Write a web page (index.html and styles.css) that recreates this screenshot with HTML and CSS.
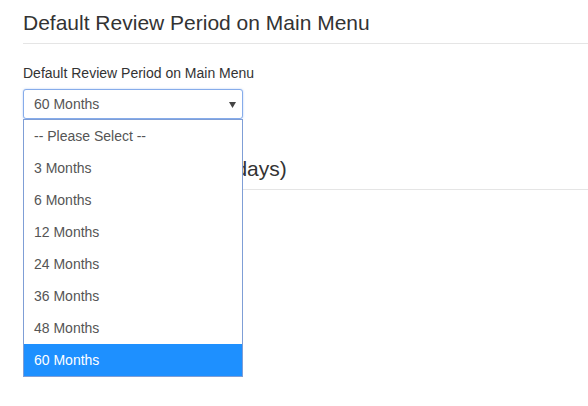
FILE: index.html
```html
<!DOCTYPE html>
<html lang="en">
<head>
<meta charset="utf-8">
<title>Default Review Period on Main Menu</title>
<link rel="stylesheet" href="styles.css">
</head>
<body>
  <section class="section">
    <h3 class="section-title">Default Review Period on Main Menu</h3>
    <div class="rule"></div>
    <div class="form-group">
      <label class="field-label">Default Review Period on Main Menu</label>
      <div class="select-wrap">
        <div class="select-box">
          <span class="select-value">60 Months</span>
          <svg class="select-arrow" width="7" height="6" viewBox="0 0 7 6"><polygon points="0,0 7,0 3.5,6" fill="#444"/></svg>
        </div>
        <ul class="dropdown">
          <li class="option">-- Please Select --</li>
          <li class="option">3 Months</li>
          <li class="option">6 Months</li>
          <li class="option">12 Months</li>
          <li class="option">24 Months</li>
          <li class="option">36 Months</li>
          <li class="option">48 Months</li>
          <li class="option selected">60 Months</li>
        </ul>
      </div>
    </div>
  </section>
  <section class="section second">
    <h3 class="section-title">Default Retain Period (days)</h3>
    <div class="rule"></div>
  </section>
</body>
</html>
```

FILE: styles.css
```css
html, body {
  margin: 0;
  padding: 0;
  background: #fff;
}

html {
  height: 100%;
}

body {
  box-sizing: border-box;
  min-height: 406px;
  height: 100%;
  padding-left: 23px;
  font-family: "Liberation Sans", Arial, sans-serif;
  color: #333;
}

.section-title {
  margin: 11px 0 0 0;
  font-size: 21px;
  font-weight: normal;
  line-height: 24px;
  color: #333;
}

.rule {
  margin-top: 8px;
  border-top: 1px solid #e5e5e5;
}

.form-group {
  margin-top: 19px;
}

.field-label {
  display: block;
  font-size: 14px;
  line-height: 20px;
  margin-bottom: 6px;
  color: #333;
}

.select-wrap {
  position: relative;
  width: 220px;
}

.select-box {
  box-sizing: border-box;
  height: 30px;
  border: 1px solid #86acea;
  border-radius: 3px;
  box-shadow: 0 0 2px rgba(102, 150, 233, 0.5);
  display: flex;
  align-items: center;
  justify-content: space-between;
  padding: 0 6px 0 10px;
  font-size: 14px;
  color: #555;
  background: #fff;
}

.select-arrow {
  display: block;
  margin-top: 1px;
}

.dropdown {
  position: absolute;
  top: 30px;
  left: 0;
  width: 220px;
  box-sizing: border-box;
  margin: 0;
  padding: 0;
  list-style: none;
  background: #fff;
  border: 1px solid #7f9ed6;
  z-index: 10;
}

.option {
  height: 32px;
  line-height: 32px;
  padding-left: 10px;
  font-size: 14px;
  color: #555;
}

.option.selected {
  background: #1e90ff;
  color: #fff;
}

.second .section-title {
  margin-top: 38px;
}
```
